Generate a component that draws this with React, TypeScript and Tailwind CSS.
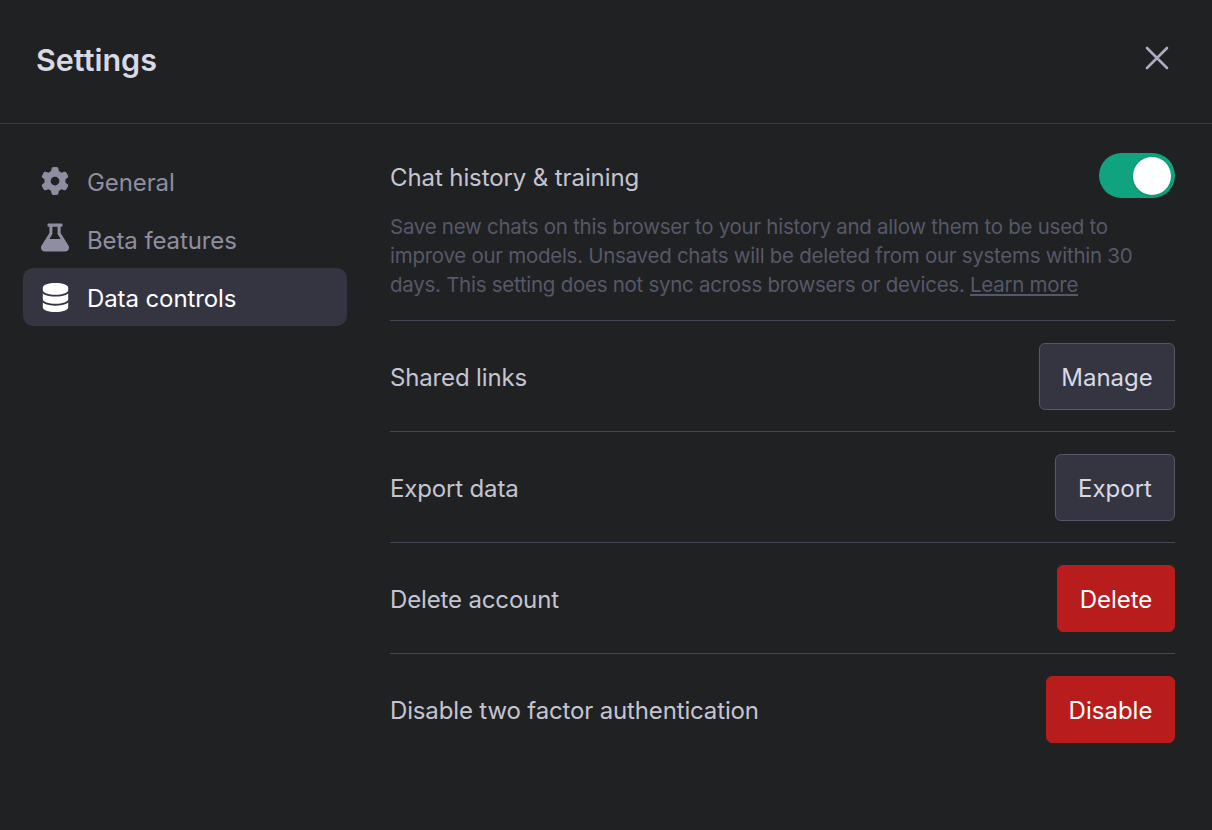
import React from "react";
import { FaGear, FaDatabase } from "react-icons/fa6";

function Flask() {
  return (
    <svg width="30" height="30" viewBox="0 0 30 30" fill="currentColor" className="-mt-[2px]">
      <path fillRule="evenodd" d="M8.5 0.5h13a1 1 0 0 1 1 1v1.2a1 1 0 0 1-1 1H20.6v6.2l7.7 12.4c1.7 2.9 0.2 6.2-3.3 6.2H5c-3.5 0-5-3.3-3.3-6.2l7.7-12.4V3.7H8.5a1 1 0 0 1-1-1V1.5a1 1 0 0 1 1-1Zm3.9 3.2v7.2l-3 5h11.2l-3-5V3.7h-5.2Z" />
    </svg>
  );
}

function NavItem({ icon, label, active }: { icon: React.ReactNode; label: string; active?: boolean }) {
  return (
    <div className={`flex h-[58px] items-center rounded-[10px] pl-[17px] ${active ? "bg-[#343541] text-white" : "text-[#8e8ea0]"}`}>
      <span className="flex w-[30px] justify-center">{icon}</span>
      <span className="ml-[17px] pt-[4px] tracking-[-0.1px]">{label}</span>
    </div>
  );
}

function Row({ label, children }: { label: string; children: React.ReactNode }) {
  return (
    <div className="flex h-[111px] items-center justify-between border-t border-[#444654]">
      <span className="pt-[3px] tracking-[-0.15px]">{label}</span>
      {children}
    </div>
  );
}

function Action({ children, danger, width }: { children: React.ReactNode; danger?: boolean; width: string }) {
  return (
    <button className={`h-[67px] rounded-[6px] border pt-[3px] ${width} ${danger ? "border-[#b91c1c] bg-[#b91c1c] text-white" : "border-[#565869] bg-[#343541] text-[#d9d9e3]"}`}>
      {children}
    </button>
  );
}

export default function App() {
  return (
    <div className="h-[830px] w-[1212px] overflow-hidden bg-[#202123] text-[24px] text-[#c5c5d2] [font-family:Inter,sans-serif]">
      <header className="flex h-[124px] items-start justify-between border-b border-[#3b3c3f] pl-[36px] pr-[43px] pt-[46px]">
        <h1 className="text-[30.5px] font-semibold leading-[28px] text-[#d9d9e3]">Settings</h1>
        <svg width="24" height="24" viewBox="0 0 24 24" fill="none" stroke="#acacbe" strokeWidth="2.6" strokeLinecap="round">
          <path d="M2 2 22 22M22 2 2 22" />
        </svg>
      </header>
      <div className="flex pl-[23px] pr-[37px] pt-[29px]">
        <nav className="-mt-[1px] w-[324px] shrink-0">
          <NavItem icon={<FaGear size={28} />} label="General" />
          <NavItem icon={<Flask />} label="Beta features" />
          <NavItem icon={<FaDatabase size={29} />} label="Data controls" active />
        </nav>
        <main className="ml-[43px] flex-1">
          <div className="pb-[21px]">
            <div className="flex h-[45px] items-center justify-between">
              <span className="pt-[5px] tracking-[-0.1px]">Chat history &amp; training</span>
              <div className="flex h-[45px] w-[76px] items-center justify-end rounded-full bg-[#10a37f] pr-[4px]">
                <div className="h-[38px] w-[38px] rounded-full bg-white shadow" />
              </div>
            </div>
            <p className="mt-[14px] text-[20.5px] leading-[29px] tracking-[-0.27px] text-[#565869]">
              Save new chats on this browser to your history and allow them to be used to improve our models. Unsaved chats will be deleted from our systems within 30 days. This setting does not sync across browsers or devices.{" "}
              <span className="underline">Learn more</span>
            </p>
          </div>
          <Row label="Shared links"><Action width="w-[136px]">Manage</Action></Row>
          <Row label="Export data"><Action width="w-[120px]">Export</Action></Row>
          <Row label="Delete account"><Action danger width="w-[118px]">Delete</Action></Row>
          <Row label="Disable two factor authentication"><Action danger width="w-[129px]">Disable</Action></Row>
        </main>
      </div>
    </div>
  );
}
